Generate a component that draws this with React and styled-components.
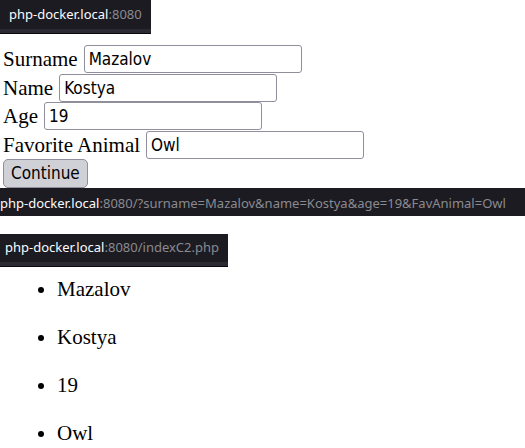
import React from "react";
import styled, { createGlobalStyle } from "styled-components";

const GlobalStyle = createGlobalStyle`
  * { box-sizing: border-box; }
  body { margin: 0; background: #fff; color: #000; font-family: "Liberation Serif", serif; font-size: 21px; overflow: hidden; }
`;
const AddressBar = styled.div`
  width: ${(p) => p.$width};
  padding: ${(p) => p.$pad};
  overflow: hidden;
  white-space: nowrap;
  background: #1c1b22;
  color: #8a8a90;
  font: 13px/18px "Noto Sans", sans-serif;
`;
const TabAddressBar = styled(AddressBar)`
  border-bottom: 1px solid #08080c;
  box-shadow: inset 0 -4px #2b2a33;
`;
const Host = styled.span`
  color: #fbfbfe;
`;
const Form = styled.form`
  padding: 11px 3px 0;
`;
const Fields = styled.div`
  height: 114px;
  display: flex;
  flex-direction: column;
  justify-content: space-between;
`;
const Field = styled.label`
  display: flex;
  align-items: center;
  gap: 6px;
  line-height: 28px;
`;
const TextInput = styled.input`
  width: 218px;
  height: 28px;
  padding: 0 4px;
  border: 1px solid #8f8f9d;
  border-radius: 3px;
  background: #fff;
  color: #000;
  font: 17px "DejaVu Sans Condensed", "Noto Sans", sans-serif;
`;
const SubmitButton = styled.button`
  display: block;
  height: 29px;
  padding: 0 7px;
  border: 1px solid #8f8f9d;
  border-radius: 5px;
  background: #d0d0d7;
  color: #000;
  font: 17px/27px "DejaVu Sans Condensed", "Noto Sans", sans-serif;
`;
const Results = styled.ul`
  margin: 8px 0 0;
  padding-left: 57px;
  display: grid;
  gap: 20px;
  line-height: 28px;
`;
const Section = styled.section`
  margin-top: 18px;
`;

const fields = [
  ["Surname", "surname", "Mazalov"],
  ["Name", "name", "Kostya"],
  ["Age", "age", "19"],
  ["Favorite Animal", "FavAnimal", "Owl"],
];

export default function App() {
  return (
    <main>
      <GlobalStyle />
      <TabAddressBar $width="151px" $pad="5px 0 10px 9px">
        <Host>php-docker.local</Host>:8080
      </TabAddressBar>
      <Form>
        <Fields>
          {fields.map(([label, name, value]) => (
            <Field key={name}>
              {label}
              <TextInput name={name} defaultValue={value} />
            </Field>
          ))}
        </Fields>
        <SubmitButton type="button">Continue</SubmitButton>
      </Form>
      <AddressBar $width="100%" $pad="6px 0 4px">
        <Host>php-docker.local</Host>:8080/?surname=Mazalov&amp;name=Kostya&amp;age=19&amp;FavAnimal=Owl
      </AddressBar>
      <Section>
        <TabAddressBar $width="228px" $pad="4px 0 10px 5px">
          <Host>php-docker.local</Host>:8080/indexC2.php
        </TabAddressBar>
        <Results>
          {fields.map(([, name, value]) => (
            <li key={name}>{value}</li>
          ))}
        </Results>
      </Section>
    </main>
  );
}
